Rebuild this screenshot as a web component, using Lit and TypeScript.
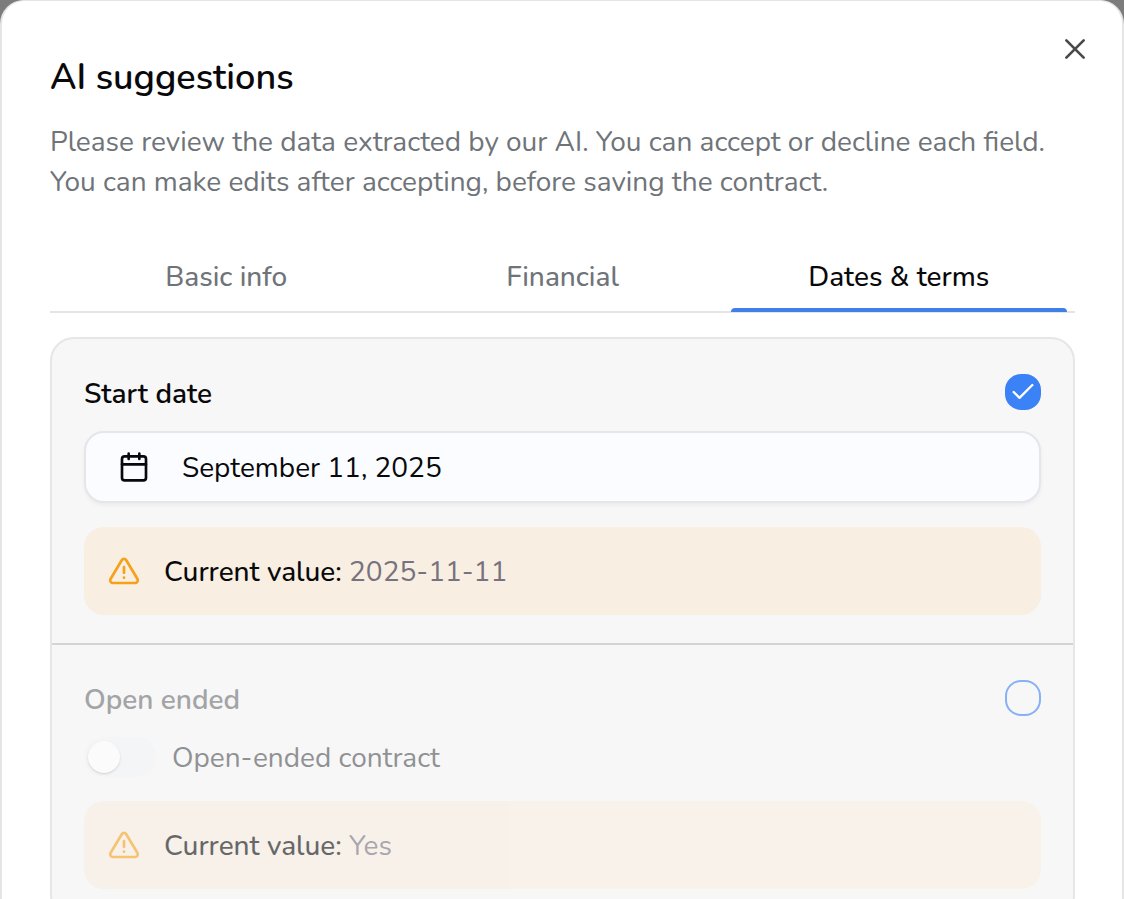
import { LitElement, html, css, nothing } from "lit";
import { customElement, property, state } from "lit/decorators.js";

const warningIcon = html`<svg class="warn" viewBox="0 0 24 24" aria-hidden="true">
  <path d="M10.3 3.9 1.9 18a2 2 0 0 0 1.7 3h16.8a2 2 0 0 0 1.7-3L13.7 3.9a2 2 0 0 0-3.4 0Z" />
  <path d="M12 9v4.4M12 17h.01" />
</svg>`;

const calendarIcon = html`<svg class="calendar" viewBox="0 0 24 24" aria-hidden="true">
  <rect x="3" y="4" width="18" height="18" rx="2" />
  <path d="M8 2v4M16 2v4M3 10h18" />
</svg>`;

@customElement("review-field")
class ReviewField extends LitElement {
  @property() label = "";
  @property() current = "";
  @property({ type: Boolean }) accepted = false;

  static styles = css`
    :host {
      display: block;
      padding: 28px 32px;
    }
    .head {
      display: flex;
      align-items: center;
      justify-content: space-between;
      height: 50px;
      margin-bottom: 14px;
    }
    .name {
      padding-top: 4px;
      font-size: 28px;
      font-weight: 600;
      line-height: 40px;
      color: #09090b;
    }
    .check {
      display: grid;
      width: 36px;
      height: 36px;
    }
    .box,
    .tick {
      grid-area: 1 / 1;
    }
    .box {
      appearance: none;
      box-sizing: border-box;
      width: 36px;
      height: 36px;
      margin: 0;
      border: 2px solid #3b82f6;
      border-radius: 16px;
      cursor: pointer;
    }
    .box:checked {
      background: #3b82f6;
    }
    .tick {
      place-self: center;
      width: 28px;
      height: 28px;
      fill: none;
      stroke: #fff;
      stroke-width: 2;
      stroke-linecap: round;
      stroke-linejoin: round;
      pointer-events: none;
    }
    .faded .name {
      color: #6b6e72;
    }
    .faded .name,
    .faded .box,
    .faded .body,
    .faded .alert {
      opacity: 0.6;
    }
    .alert {
      display: flex;
      align-items: center;
      gap: 24px;
      margin-top: 24px;
      padding: 23px 24px;
      border-radius: 20px;
      background: #f8eee1;
      font-size: 28px;
      line-height: 40px;
    }
    .text {
      padding-top: 2px;
    }
    .warn {
      width: 32px;
      height: 32px;
      fill: none;
      stroke: #f5a11a;
      stroke-width: 2;
      stroke-linecap: round;
      stroke-linejoin: round;
    }
    .key {
      font-weight: 500;
      color: #09090b;
    }
    .value {
      color: #767280;
    }
  `;

  private toggle(e: Event) {
    this.accepted = (e.target as HTMLInputElement).checked;
  }

  render() {
    return html`<section class=${this.accepted ? "field" : "field faded"}>
      <div class="head">
        <label class="name" for="accept">${this.label}</label>
        <span class="check">
          <input class="box" id="accept" type="checkbox" .checked=${this.accepted} @change=${this.toggle} />
          ${this.accepted
            ? html`<svg class="tick" viewBox="0 0 24 24" aria-hidden="true"><path d="M20 6 9 17l-5-5" /></svg>`
            : nothing}
        </span>
      </div>
      <div class="body"><slot></slot></div>
      <div class="alert">
        ${warningIcon}
        <span class="text"
          ><span class="key">Current value:</span> <span class="value">${this.current}</span></span
        >
      </div>
    </section>`;
  }
}

@customElement("app-root")
class AppRoot extends LitElement {
  @state() private active = "Dates & terms";

  static styles = css`
    :host {
      display: block;
      height: 100vh;
      overflow: hidden;
      background: #7c7c7c;
      color: #09090b;
      font-family: Nunito, Lato, sans-serif;
    }
    .dialog {
      position: relative;
      box-sizing: border-box;
      height: 100%;
      padding: 55px 47px 0 48px;
      overflow: hidden;
      border: 2px solid #e5e5e5;
      border-width: 1px 2px 0;
      border-radius: 24px 24px 0 0;
      background: #fff;
    }
    .close {
      position: absolute;
      top: 32px;
      right: 31px;
      display: grid;
      padding: 0;
      border: 0;
      background: none;
      cursor: pointer;
    }
    .close svg {
      width: 32px;
      height: 32px;
      fill: none;
      stroke: #4a4a4a;
      stroke-width: 2;
      stroke-linecap: round;
    }
    .title {
      margin: 0;
      font-size: 36px;
      font-weight: 600;
      line-height: 44px;
    }
    .intro {
      margin: 22px 0 40px;
      font-size: 28px;
      line-height: 40px;
      color: #6f7479;
    }
    .tabs {
      display: grid;
      grid-template-columns: repeat(3, 1fr);
      padding: 0 8px;
      border-bottom: 2px solid #e5e5e5;
    }
    .tab {
      display: grid;
      grid-template-rows: 1fr 4px;
      align-items: center;
      height: 70px;
      margin-bottom: -1px;
      padding: 0;
      border: 0;
      background: none;
      font: inherit;
      font-size: 28px;
      font-weight: 500;
      line-height: 40px;
      color: #6f7479;
      cursor: pointer;
    }
    .tab span {
      padding-top: 4px;
    }
    .tab::after {
      content: "";
      align-self: stretch;
      border-radius: 4px 4px 0 0;
    }
    .tab.active {
      color: #09090b;
    }
    .tab.active::after {
      background: #3f80e8;
    }
    .card {
      margin-top: 24px;
      border: 2px solid #e5e6e7;
      border-radius: 24px;
      background: #f7f7f7;
    }
    .card review-field + review-field {
      border-top: 2px solid #d3d4d5;
    }
    .date {
      display: flex;
      align-items: center;
      gap: 32px;
      box-sizing: border-box;
      width: 100%;
      height: 72px;
      padding: 0 32px;
      border: 2px solid #e4e6ea;
      border-radius: 20px;
      background: #fafcff;
      box-shadow: 0 2px 4px rgba(0, 0, 0, 0.05);
      font: inherit;
      font-size: 28px;
      line-height: 40px;
      color: #09090b;
      cursor: pointer;
    }
    .text {
      padding-top: 2px;
    }
    .calendar {
      width: 32px;
      height: 32px;
      fill: none;
      stroke: currentColor;
      stroke-width: 2;
      stroke-linecap: round;
      stroke-linejoin: round;
    }
    .option {
      display: flex;
      align-items: center;
      gap: 16px;
      height: 40px;
      font-size: 28px;
      line-height: 40px;
      color: #4d4f52;
    }
    .switch {
      appearance: none;
      display: flex;
      box-sizing: border-box;
      width: 72px;
      height: 40px;
      margin: 0;
      padding: 4px;
      border-radius: 20px;
      background: #f2f4f7;
      cursor: pointer;
    }
    .switch::before {
      content: "";
      width: 32px;
      height: 32px;
      border-radius: 16px;
      background: #fff;
      box-shadow: 0 1px 2px rgba(0, 0, 0, 0.25);
    }
    .switch:checked {
      justify-content: flex-end;
      background: #3b82f6;
    }
  `;

  render() {
    return html`<main class="dialog" role="dialog" aria-labelledby="title">
      <button class="close" aria-label="Close">
        <svg viewBox="0 0 24 24"><path d="M18.5 5.5l-13 13M5.5 5.5l13 13" /></svg>
      </button>
      <h1 class="title" id="title">AI suggestions</h1>
      <p class="intro">
        Please review the data extracted by our AI. You can accept or decline each field. You can make edits after
        accepting, before saving the contract.
      </p>
      <div class="tabs" role="tablist">
        ${["Basic info", "Financial", "Dates & terms"].map(
          (name) => html`<button
            class=${name === this.active ? "tab active" : "tab"}
            role="tab"
            aria-selected=${name === this.active}
            @click=${() => (this.active = name)}
          >
            <span>${name}</span>
          </button>`
        )}
      </div>
      <div class="card">
        <review-field label="Start date" current="2025-11-11" accepted>
          <button class="date">${calendarIcon}<span class="text">September 11, 2025</span></button>
        </review-field>
        <review-field label="Open ended" current="Yes">
          <label class="option"
            ><input class="switch" type="checkbox" role="switch" /><span class="text">Open-ended contract</span></label
          >
        </review-field>
      </div>
    </main>`;
  }
}
